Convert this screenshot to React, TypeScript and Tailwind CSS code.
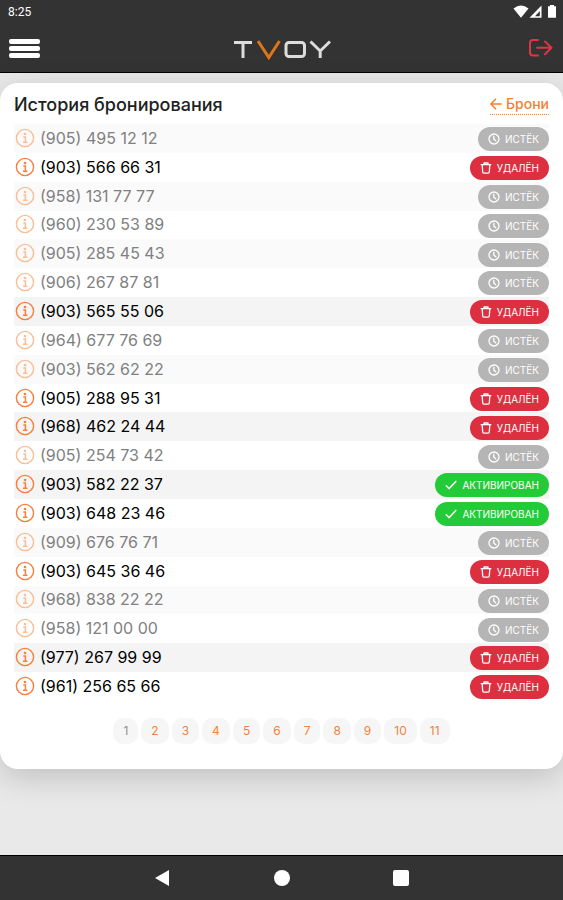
type Status = "expired" | "deleted" | "activated";

const bookings: { phone: string; status: Status }[] = [
  { phone: "(905) 495 12 12", status: "expired" },
  { phone: "(903) 566 66 31", status: "deleted" },
  { phone: "(958) 131 77 77", status: "expired" },
  { phone: "(960) 230 53 89", status: "expired" },
  { phone: "(905) 285 45 43", status: "expired" },
  { phone: "(906) 267 87 81", status: "expired" },
  { phone: "(903) 565 55 06", status: "deleted" },
  { phone: "(964) 677 76 69", status: "expired" },
  { phone: "(903) 562 62 22", status: "expired" },
  { phone: "(905) 288 95 31", status: "deleted" },
  { phone: "(968) 462 24 44", status: "deleted" },
  { phone: "(905) 254 73 42", status: "expired" },
  { phone: "(903) 582 22 37", status: "activated" },
  { phone: "(903) 648 23 46", status: "activated" },
  { phone: "(909) 676 76 71", status: "expired" },
  { phone: "(903) 645 36 46", status: "deleted" },
  { phone: "(968) 838 22 22", status: "expired" },
  { phone: "(958) 121 00 00", status: "expired" },
  { phone: "(977) 267 99 99", status: "deleted" },
  { phone: "(961) 256 65 66", status: "deleted" },
];

const pages = [1, 2, 3, 4, 5, 6, 7, 8, 9, 10, 11];

const badges: Record<Status, { label: string; color: string }> = {
  expired: { label: "ИСТЁК", color: "bg-[#b5b5b5]" },
  deleted: { label: "УДАЛЁН", color: "bg-[#dc2f40]" },
  activated: { label: "АКТИВИРОВАН", color: "bg-[#23cb38]" },
};

function StatusIcon({ status }: { status: Status }) {
  return (
    <svg
      className="size-3 shrink-0"
      viewBox="0 0 12 12"
      fill="none"
      stroke="currentColor"
      strokeWidth="1.3"
      strokeLinecap="round"
      strokeLinejoin="round"
      aria-hidden="true"
    >
      {status === "expired" && (
        <>
          <circle cx="6" cy="6" r="5" />
          <path d="M5.8 3.2V6L7.8 7.8" />
        </>
      )}
      {status === "deleted" && (
        <>
          <path d="M1.2 2.7H10.8M4 2.5V1H8V2.5" />
          <path d="M2.2 2.9L2.7 10Q2.8 11.2 3.9 11.2H8.1Q9.2 11.2 9.3 10L9.8 2.9" />
        </>
      )}
      {status === "activated" && <path d="M1.2 6.8L4.2 9.6L10.8 2.4" strokeWidth="1.5" />}
    </svg>
  );
}

function StatusBadge({ status }: { status: Status }) {
  const { label, color } = badges[status];
  return (
    <span
      className={`inline-flex h-6 items-center gap-[5px] rounded-full px-2.5 align-middle text-[10px] leading-3 text-white ${color}`}
    >
      <StatusIcon status={status} />
      {label}
    </span>
  );
}

function InfoIcon() {
  return (
    <svg className="size-5 shrink-0" viewBox="0 0 20 20" fill="none" stroke="currentColor" aria-hidden="true">
      <circle cx="10" cy="10" r="8.6" strokeWidth="1.4" />
      <circle cx="10" cy="6" r="1.3" fill="currentColor" stroke="none" />
      <path d="M8.3 9H10.4V14M8 14.2H12.4" strokeWidth="1.5" />
    </svg>
  );
}

function StatusBar() {
  return (
    <div className="flex h-6 items-center justify-between pr-1.5 pl-2 text-white">
      <span className="font-[Roboto,sans-serif] text-xs">8:25</span>
      <svg className="h-4 w-11" viewBox="0 0 44 16" fill="#fff" aria-hidden="true">
        <path d="M0.5 4.6Q8 -1.6 15.5 4.6L8 13.8Z" />
        <path d="M16.5 13.8L28.5 1.5V13.8Z" />
        <path d="M22 12.3L26.8 7V12.3Z" fill="#333" />
        <path d="M35 2.3H37V1H41V2.3H43V13.8H35Z" />
      </svg>
    </div>
  );
}

function Header() {
  return (
    <header className="border-b border-black bg-[#333]">
      <StatusBar />
      <div className="flex h-12 items-center justify-between px-2">
        <button type="button" aria-label="Меню" className="flex w-8 flex-col gap-0.5 pl-px">
          <span className="h-[5px] rounded-xs bg-white" />
          <span className="h-[5px] rounded-xs bg-white" />
          <span className="h-[5px] rounded-xs bg-white" />
        </button>
        <svg className="h-6 w-[98px]" viewBox="0 -3 98 24" fill="none" strokeWidth="3" role="img" aria-label="TVOY">
          <g stroke="#ddd">
            <path d="M1 3.5H19M10 3.5V19" />
            <rect x="53" y="3.5" width="18.5" height="14" rx="3" />
            <path d="M77.5 2.5L87.2 12L97 2.5M87.2 11V19" />
          </g>
          <path d="M25 2L35.8 18.5L46.5 2" stroke="#df7616" />
        </svg>
        <button type="button" aria-label="Выйти" className="flex w-8 justify-end pr-0.5 text-[#dc3545]">
          <svg
            className="h-[18px] w-6"
            viewBox="0 0 24 18"
            fill="none"
            stroke="currentColor"
            strokeWidth="2"
            strokeLinecap="round"
            strokeLinejoin="round"
          >
            <path d="M9 1H4Q1 1 1 4V13.5Q1 16.5 4 16.5H9" />
            <path d="M8 8.8H22.5M16 2.5L22.5 8.8L16 15.2" />
          </svg>
        </button>
      </div>
    </header>
  );
}

function SystemNav() {
  return (
    <footer className="flex h-[45px] items-center justify-center gap-[102px] border-t border-black bg-[#333]">
      <button type="button" aria-label="Назад">
        <svg className="size-[18px]" viewBox="0 0 18 18" fill="#fff">
          <path d="M1 9L15 1V17Z" />
        </svg>
      </button>
      <button type="button" aria-label="Домой" className="size-4 rounded-full bg-white" />
      <button type="button" aria-label="Недавние" className="flex w-[18px] justify-center">
        <span className="size-4 rounded-xs bg-white" />
      </button>
    </footer>
  );
}

export default function App() {
  return (
    <div className="flex min-h-screen flex-col bg-[#e9e9e9] font-[Inter,'Noto_Sans',sans-serif] text-[#212121]">
      <Header />
      <main className="flex-1 pt-2.5">
        <section className="rounded-[18px] bg-white px-3.5 pt-2.5 pb-[25px] shadow-[0_8px_32px_rgba(0,0,0,0.18)]">
          <div className="flex h-[31px] items-start justify-between">
            <h1 className="text-lg leading-6 font-medium">История бронирования</h1>
            <a
              href="#bookings"
              className="flex items-center gap-1 border-b border-dotted border-[#f5802f] text-sm leading-[21px] font-medium text-[#f5802f]"
            >
              <svg
                className="size-3"
                viewBox="0 0 12 12"
                fill="none"
                stroke="currentColor"
                strokeWidth="1.5"
                strokeLinecap="round"
                strokeLinejoin="round"
                aria-hidden="true"
              >
                <path d="M11.2 6H1M5.5 1.2L0.9 6L5.5 10.8" />
              </svg>
              Брони
            </a>
          </div>
          <table className="h-[577px] w-full border-collapse">
            <tbody>
              {bookings.map(({ phone, status }) => {
                const faded = status === "expired";
                return (
                  <tr key={phone} className={faded ? "odd:bg-[#fafafa]" : "odd:bg-[#f4f4f4]"}>
                    <td className="p-0 pb-px pl-px">
                      <div
                        className={`flex items-center gap-[5px] text-base leading-5 ${faded ? "text-[#808080]" : "text-black"}`}
                      >
                        <span className={faded ? "text-[#fbbd94]" : "text-[#f5803c]"}>
                          <InfoIcon />
                        </span>
                        {phone}
                      </div>
                    </td>
                    <td className="p-0 text-right leading-6">
                      <StatusBadge status={status} />
                    </td>
                  </tr>
                );
              })}
            </tbody>
          </table>
          <nav aria-label="Страницы" className="mt-[17px] flex justify-center gap-[3px]">
            {pages.map((page) => (
              <a
                key={page}
                href={`#page-${page}`}
                aria-current={page === 1 ? "page" : undefined}
                className={`rounded-[10px] bg-[#f6f6f6] px-2.5 text-center text-xs leading-[26px] ${
                  page === 1 ? "text-[#909090]" : "text-[#f5803c]"
                }`}
              >
                {page}
              </a>
            ))}
          </nav>
        </section>
      </main>
      <SystemNav />
    </div>
  );
}
